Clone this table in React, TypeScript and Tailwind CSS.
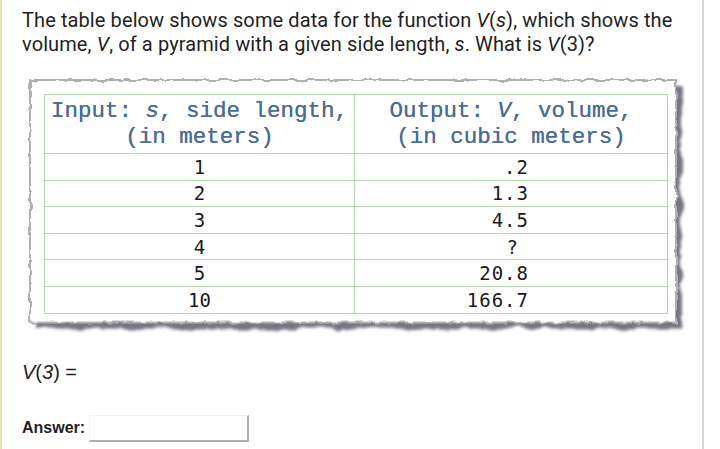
import React from 'react';

const rows: { s: string; v: string }[] = [
  { s: '1', v: '.2' },
  { s: '2', v: '1.3' },
  { s: '3', v: '4.5' },
  { s: '4', v: '?' },
  { s: '5', v: '20.8' },
  { s: '10', v: '166.7' },
];

const TornPaper: React.FC = () => (
  <svg className="absolute inset-0 w-full h-full overflow-visible pointer-events-none" aria-hidden>
    <defs>
      <filter id="rough" x="-5%" y="-5%" width="110%" height="110%">
        <feTurbulence type="fractalNoise" baseFrequency="0.09" numOctaves="3" seed="4" />
        <feDisplacementMap in="SourceGraphic" scale="5" />
      </filter>
      <filter id="roughShadow" x="-5%" y="-5%" width="110%" height="110%">
        <feTurbulence type="fractalNoise" baseFrequency="0.05" numOctaves="3" seed="9" result="n" />
        <feDisplacementMap in="SourceGraphic" in2="n" scale="9" result="d" />
        <feGaussianBlur in="d" stdDeviation="1.6" />
      </filter>
    </defs>
    <rect x="6" y="6" width="100%" height="100%" fill="#7a7582" filter="url(#roughShadow)" />
    <rect x="0" y="0" width="100%" height="100%" fill="#ffffff" stroke="#b0b0b0" strokeWidth="2" filter="url(#rough)" />
  </svg>
);

export default function App() {
  return (
    <div className="w-[720px] h-[449px] bg-white flex overflow-hidden">
      <div className="w-[2px] bg-[#e8e4b8]" />
      <div className="w-[702px] border-r-2 border-[#d6d6d6] pl-[20px] pt-[8px] text-[#1f1f1f]">
        <p className="font-['Roboto',sans-serif] text-[20px] leading-[24px] tracking-[0.1px]">
          The table below shows some data for the function <i>V</i>(<i>s</i>), which shows the
          volume, <i>V</i>, of a pyramid with a given side length, <i>s</i>. What is <i>V</i>(3)?
        </p>

        <div className="relative mt-[24px] ml-[8px] w-[646px] pt-[14px] pl-[14px] pb-[9px]">
          <TornPaper />
          <table className="relative w-[624px] border-collapse border border-[#b4d4ad]">
            <thead>
              <tr>
                <th className="w-[310px] h-[59px] border border-[#b4d4ad] font-normal font-['Liberation_Mono',monospace] text-[22.5px] leading-[26px] text-[#4b6c98] [text-shadow:0_0_0.4px_#4b6c98]">
                  Input: <i>s</i>, side length,
                  <br />
                  (in meters)
                </th>
                <th className="h-[59px] border border-[#b4d4ad] font-normal font-['Liberation_Mono',monospace] text-[22.5px] leading-[26px] text-[#4b6c98] [text-shadow:0_0_0.4px_#4b6c98]">
                  Output: <i>V</i>, volume,
                  <br />
                  (in cubic meters)
                </th>
              </tr>
            </thead>
            <tbody className="font-['DejaVu_Sans_Mono',monospace] text-[19px] text-[#1a1a1a]">
              {rows.map((r) => (
                <tr key={r.s} className="h-[26.6px]">
                  <td className="border border-[#b4d4ad] text-center leading-[24px] p-0">{r.s}</td>
                  <td className="border border-[#b4d4ad] text-right leading-[24px] p-0 pr-[138px] tracking-[1px]">
                    {r.v === '?' ? <span className="pr-[10px]">?</span> : r.v}
                  </td>
                </tr>
              ))}
            </tbody>
          </table>
        </div>

        <p className="mt-[37px] font-['Liberation_Sans',sans-serif] text-[20px] leading-[24px]">
          <i>V</i>(<i>3</i>) =
        </p>

        <div className="mt-[31px] flex items-center gap-[4px] font-['Liberation_Sans',sans-serif]">
          <span className="font-bold text-[16px]">Answer:</span>
          <div className="w-[160px] h-[27px] border-r-2 border-b-2 border-[#b0b0b0] border-t border-l border-t-[#f2f2f2] border-l-[#f2f2f2]" />
        </div>
      </div>
    </div>
  );
}
